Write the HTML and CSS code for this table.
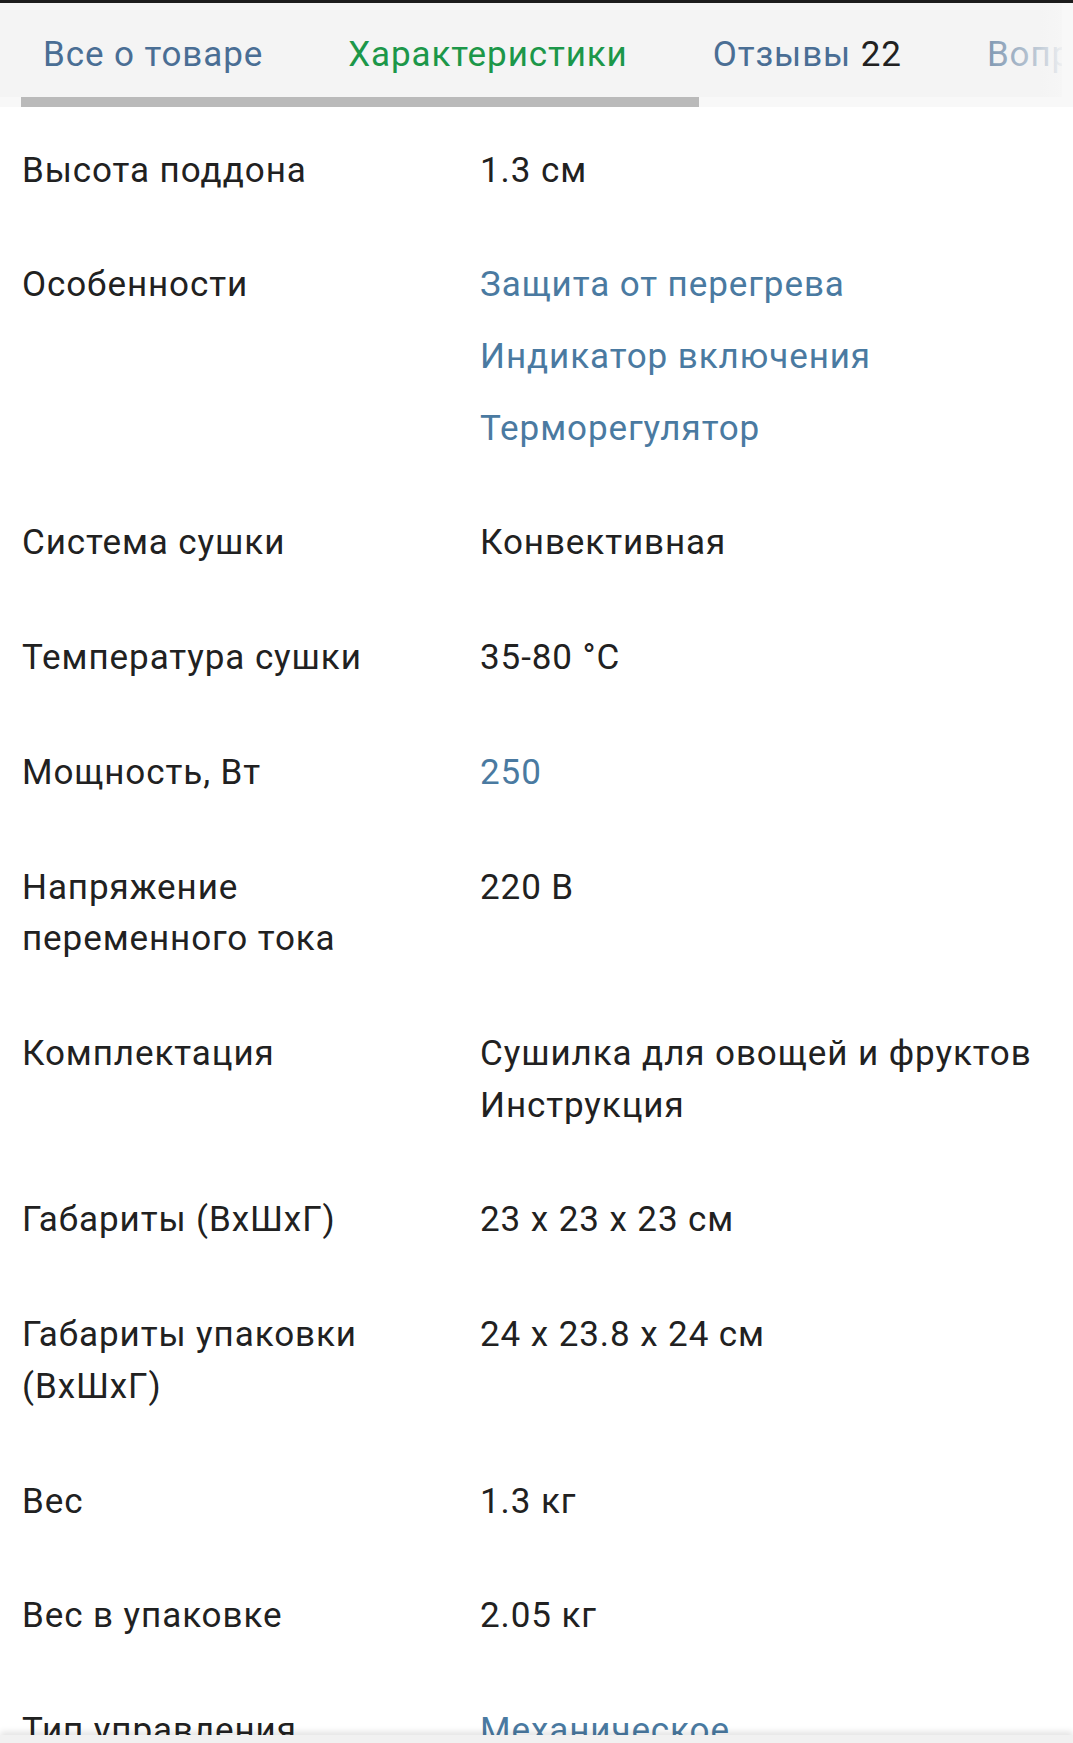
FILE: index.html
```html
<!DOCTYPE html>
<html lang="ru">
<head>
<meta charset="utf-8">
<title>Характеристики</title>
<link rel="stylesheet" href="styles.css">
</head>
<body>
<div class="topline"></div>
<nav class="tabs">
  <div class="tab-clip">
    <div class="tab-row">
      <span class="tab">Все о товаре</span>
      <span class="tab active">Характеристики</span>
      <span class="tab">Отзывы <span class="count">22</span></span>
      <span class="tab">Вопросы</span>
    </div>
    <div class="fade"></div>
  </div>
  <div class="indicator"></div>
</nav>
<main class="specs">
  <div class="row"><div class="label">Высота поддона</div><div class="value">1.3 см</div></div>
  <div class="row"><div class="label">Особенности</div><div class="value list"><a class="link">Защита от перегрева</a><a class="link">Индикатор включения</a><a class="link">Терморегулятор</a></div></div>
  <div class="row"><div class="label">Система сушки</div><div class="value">Конвективная</div></div>
  <div class="row"><div class="label">Температура сушки</div><div class="value">35-80 °C</div></div>
  <div class="row"><div class="label">Мощность, Вт</div><div class="value"><a class="link">250</a></div></div>
  <div class="row"><div class="label">Напряжение<br>переменного тока</div><div class="value">220 В</div></div>
  <div class="row"><div class="label">Комплектация</div><div class="value">Сушилка для овощей и фруктов<br>Инструкция</div></div>
  <div class="row"><div class="label">Габариты (ВхШхГ)</div><div class="value">23 x 23 x 23 см</div></div>
  <div class="row"><div class="label">Габариты упаковки<br>(ВхШхГ)</div><div class="value">24 x 23.8 x 24 см</div></div>
  <div class="row"><div class="label">Вес</div><div class="value">1.3 кг</div></div>
  <div class="row"><div class="label">Вес в упаковке</div><div class="value">2.05 кг</div></div>
  <div class="row"><div class="label">Тип управления</div><div class="value"><a class="link">Механическое</a></div></div>
  <div class="row"><div class="label">Гарантия</div><div class="value">1 год</div></div>
</main>
<div class="bottom-bar"></div>
</body>
</html>
```

FILE: styles.css
```css
html, body {
  margin: 0;
  padding: 0;
  background: #ffffff;
  overflow: hidden;
  height: 1743px;
}
body {
  font-family: Roboto, "Noto Sans", "Liberation Sans", sans-serif;
  color: #212121;
}
.topline {
  height: 3px;
  background: #1c1c1c;
}
.tabs {
  background: #f8f8f8;
}
.tab-clip {
  position: relative;
  margin-right: 11px;
  overflow: hidden;
  background: #f4f4f4;
}
.tab-row {
  display: flex;
  gap: 85px;
  padding: 35px 0 25px 43px;
  white-space: nowrap;
}
.tab {
  font-size: 35px;
  line-height: 34px;
  letter-spacing: 0.9px;
  color: #4a6e94;
  flex: none;
}
.tab.active {
  color: #1c9749;
}
.count {
  color: #212121;
}
.fade {
  position: absolute;
  top: 0;
  right: 0;
  width: 110px;
  height: 100%;
  background: linear-gradient(to right, rgba(244,244,244,0) 0%, rgba(244,244,244,0.3) 30%, rgba(244,244,244,0.7) 80%, rgba(246,246,246,0.95) 100%);
}
.indicator {
  margin-left: 21px;
  width: 678px;
  height: 10px;
  background: #bababa;
}
.specs {
  padding: 6px 22px 0 22px;
}
.row {
  display: grid;
  grid-template-columns: 458px 1fr;
  padding: 31.6px 0;
  font-size: 35px;
  line-height: 51.6px;
  letter-spacing: 0.92px;
}
.label {
  color: #212121;
}
.value {
  color: #212121;
}
.value.list {
  display: flex;
  flex-direction: column;
  gap: 20px;
}
.link {
  color: #4a7aa1;
  text-decoration: none;
}
.bottom-bar {
  position: fixed;
  left: 0;
  right: 0;
  bottom: 0;
  height: 8px;
  background: #f1f1f1;
  box-shadow: 0 -3px 6px rgba(0,0,0,0.12);
}
```
